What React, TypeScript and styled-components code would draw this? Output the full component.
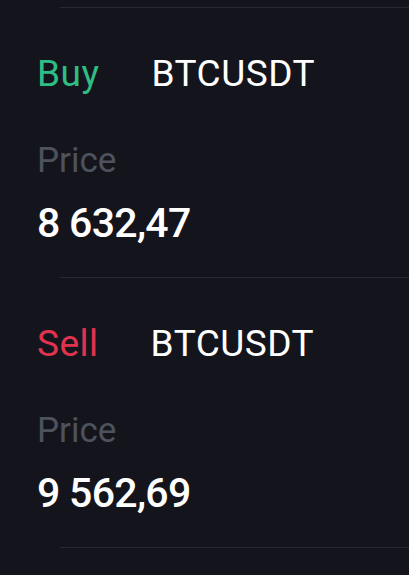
import React from "react";
import styled, { createGlobalStyle } from "styled-components";

const Global = createGlobalStyle`
  html, body { margin: 0; padding: 0; background: #14151c; }
  body { font-family: Roboto, "Noto Sans", sans-serif; -webkit-font-smoothing: antialiased; }
`;

const Page = styled.div`
  background: #14151c;
  min-height: 575px;
  padding-top: 7px;
  box-sizing: border-box;
`;

const Divider = styled.div`
  height: 1px;
  margin-left: 60px;
  background: #262a31;
`;

const Order = styled.section`
  display: flex;
  flex-direction: column;
  padding: 44px 0 30px 37px;
`;

const Header = styled.div`
  display: flex;
  align-items: baseline;
  gap: 52px;
  height: 44px;
  line-height: 44px;
  font-size: 37px;
  font-weight: 400;
  letter-spacing: 0.5px;
`;

const Side = styled.span<{ $side: "buy" | "sell" }>`
  color: ${(p) => (p.$side === "buy" ? "#2ebd85" : "#e0334f")};
`;

const Symbol = styled.span`
  color: #ffffff;
`;

const Label = styled.div`
  margin-top: 44px;
  font-size: 35px;
  line-height: 42px;
  color: #4d525d;
`;

const Value = styled.div`
  margin-top: 17px;
  font-size: 41px;
  line-height: 48px;
  font-weight: 500;
  color: #ffffff;
  letter-spacing: -0.7px;
`;

const orders: { side: "buy" | "sell"; label: string; symbol: string; price: string }[] = [
  { side: "buy", label: "Buy", symbol: "BTCUSDT", price: "8 632,47" },
  { side: "sell", label: "Sell", symbol: "BTCUSDT", price: "9 562,69" },
];

export default function App() {
  return (
    <Page>
      <Global />
      <Divider />
      {orders.map((o) => (
        <React.Fragment key={o.price}>
          <Order>
            <Header>
              <Side $side={o.side}>{o.label}</Side>
              <Symbol>{o.symbol}</Symbol>
            </Header>
            <Label>Price</Label>
            <Value>{o.price}</Value>
          </Order>
          <Divider />
        </React.Fragment>
      ))}
    </Page>
  );
}
